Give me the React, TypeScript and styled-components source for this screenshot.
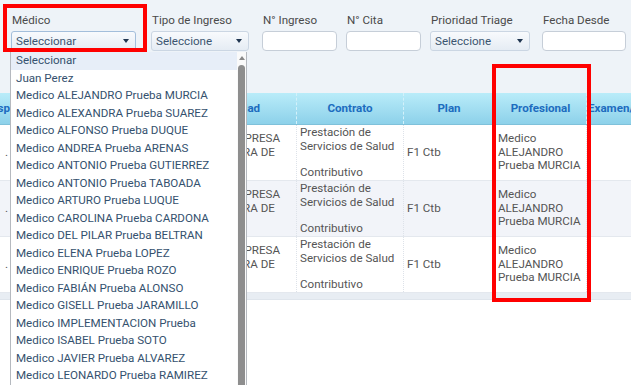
import React from 'react';
import styled, { createGlobalStyle } from 'styled-components';

const GlobalStyle = createGlobalStyle`
  html, body { margin: 0; padding: 0; background: #fff; }
  body { font-family: Roboto, "Liberation Sans", sans-serif; font-size: 11.6px; color: #555; }
`;

const Page = styled.div`
  position: relative;
  width: 631px;
  height: 385px;
  overflow: hidden;
  background: #fff;
`;

const FilterBar = styled.div`
  display: flex;
  height: 93px;
  box-sizing: border-box;
  padding: 12px 0 0 11px;
  background: #eef3f8;
`;

const Field = styled.div<{ $w: number }>`
  position: relative;
  flex: 0 0 ${(p) => p.$w}px;
  display: flex;
  flex-direction: column;
`;

const Label = styled.div`
  height: 19px;
  line-height: 16px;
  padding-left: 1px;
  font-size: 11.6px;
  color: #4a4a4a;
`;

const SelectBox = styled.div<{ $w: number; $active?: boolean }>`
  width: ${(p) => p.$w}px;
  height: 20px;
  box-sizing: border-box;
  display: flex;
  align-items: center;
  justify-content: space-between;
  padding: 0 6px 0 4px;
  border: 1px solid ${(p) => (p.$active ? '#a3bedb' : '#cbd6e3')};
  border-radius: 3px;
  background: linear-gradient(#f8fafd, #e5ecf4);
  color: #3b5570;
  font-size: 11.6px;
`;

const Caret = styled.span`
  width: 0;
  height: 0;
  border-left: 3.5px solid transparent;
  border-right: 3.5px solid transparent;
  border-top: 4px solid #1f3550;
`;

const TextInput = styled.div<{ $w: number }>`
  width: ${(p) => p.$w}px;
  height: 20px;
  box-sizing: border-box;
  border: 1px solid #c6ced8;
  border-radius: 4px;
  background: #fff;
`;

const DropList = styled.div`
  position: absolute;
  left: -1px;
  top: 40px;
  z-index: 5;
  width: 237px;
  height: 360px;
  box-sizing: border-box;
  display: flex;
  border: 1px solid #b5b9bf;
  border-top: none;
  background: #fff;
`;

const Options = styled.div`
  flex: 1;
  display: flex;
  flex-direction: column;
`;

const Option = styled.div<{ $selected?: boolean }>`
  height: 17.5px;
  line-height: 17.5px;
  padding-left: 5px;
  white-space: nowrap;
  color: #34516e;
  font-size: 11.6px;
  background: ${(p) => (p.$selected ? '#e7eef8' : 'transparent')};
`;

const ScrollTrack = styled.div`
  flex: 0 0 9px;
  display: flex;
  flex-direction: column;
  align-items: center;
  padding-top: 4px;
  background: #fafafa;
`;

const ArrowUp = styled.span`
  width: 0;
  height: 0;
  border-left: 3px solid transparent;
  border-right: 3px solid transparent;
  border-bottom: 4px solid #888;
`;

const Thumb = styled.div`
  margin-top: 5px;
  width: 7px;
  flex: 1;
  border-radius: 4px;
  background: #8e8e8e;
`;

const COLS = '52px 173px 112px 107px 91px 92px 80px';

const Table = styled.div`
  margin-left: -40px;
`;

const HeadRow = styled.div`
  display: grid;
  grid-template-columns: ${COLS};
  height: 31px;
  background: linear-gradient(#b9ecf9, #8dd1ea);
  border-bottom: 1px solid #7fc1da;
`;

const HeadCell = styled.div<{ $align?: string }>`
  overflow: hidden;
  white-space: nowrap;
  line-height: 31px;
  padding: 0 1px;
  text-align: ${(p) => p.$align || 'center'};
  color: #1c6cbf;
  font-weight: bold;
  font-size: 11.6px;
  border-right: 1px dashed #d3f1fa;
`;

const Row = styled.div<{ $alt?: boolean }>`
  display: grid;
  grid-template-columns: ${COLS};
  height: 55px;
  border-bottom: 1px solid #e4e8ee;
  background: ${(p) => (p.$alt ? '#f2f4f9' : '#fff')};
`;

const Cell = styled.div<{ $top?: boolean; $right?: boolean }>`
  overflow: hidden;
  display: flex;
  flex-direction: column;
  justify-content: ${(p) => (p.$top ? 'flex-start' : 'center')};
  align-items: ${(p) => (p.$right ? 'flex-end' : 'flex-start')};
  padding: 1px 3px;
  line-height: 13.5px;
  font-size: 11.6px;
  color: #555;
  white-space: nowrap;
  border-right: 1px dotted #dde2e9;
`;

const Blank = styled.span`
  height: 13.5px;
`;

const FootBand = styled.div`
  height: 6px;
  background: #e8edf3;
  border-bottom: 1px solid #dfe5ec;
`;

const Marker = styled.div<{ $x: number; $y: number; $w: number; $h: number }>`
  position: absolute;
  left: ${(p) => p.$x}px;
  top: ${(p) => p.$y}px;
  width: ${(p) => p.$w}px;
  height: ${(p) => p.$h}px;
  box-sizing: border-box;
  border: 4px solid #ff0000;
  z-index: 10;
`;

const MEDICOS = [
  'Seleccionar',
  'Juan Perez',
  'Medico ALEJANDRO Prueba MURCIA',
  'Medico ALEXANDRA Prueba SUAREZ',
  'Medico ALFONSO Prueba DUQUE',
  'Medico ANDREA Prueba ARENAS',
  'Medico ANTONIO Prueba GUTIERREZ',
  'Medico ANTONIO Prueba TABOADA',
  'Medico ARTURO Prueba LUQUE',
  'Medico CAROLINA Prueba CARDONA',
  'Medico DEL PILAR Prueba BELTRAN',
  'Medico ELENA Prueba LOPEZ',
  'Medico ENRIQUE Prueba ROZO',
  'Medico FABIÁN Prueba ALONSO',
  'Medico GISELL Prueba JARAMILLO',
  'Medico IMPLEMENTACION Prueba',
  'Medico ISABEL Prueba SOTO',
  'Medico JAVIER Prueba ALVAREZ',
  'Medico LEONARDO Prueba RAMIREZ',
  'Medico LUIS Prueba GARCIA',
];

const ROWS = [1, 2, 3];

const App = () => {
  return (
    <Page>
      <GlobalStyle />
      <FilterBar>
        <Field $w={140}>
          <Label>Médico</Label>
          <SelectBox $w={125} $active>
            <span>Seleccionar</span>
            <Caret />
          </SelectBox>
          <DropList>
            <Options>
              {MEDICOS.map((m, i) => (
                <Option key={m} $selected={i === 0}>
                  {m}
                </Option>
              ))}
            </Options>
            <ScrollTrack>
              <ArrowUp />
              <Thumb />
            </ScrollTrack>
          </DropList>
        </Field>
        <Field $w={111}>
          <Label>Tipo de Ingreso</Label>
          <SelectBox $w={98}>
            <span>Seleccione</span>
            <Caret />
          </SelectBox>
        </Field>
        <Field $w={84}>
          <Label>N° Ingreso</Label>
          <TextInput $w={75} />
        </Field>
        <Field $w={84}>
          <Label>N° Cita</Label>
          <TextInput $w={75} />
        </Field>
        <Field $w={112}>
          <Label>Prioridad Triage</Label>
          <SelectBox $w={100}>
            <span>Seleccione</span>
            <Caret />
          </SelectBox>
        </Field>
        <Field $w={90}>
          <Label>Fecha Desde</Label>
          <TextInput $w={84} />
        </Field>
      </FilterBar>

      <Table>
        <HeadRow>
          <HeadCell $align="right">Resp</HeadCell>
          <HeadCell>Paciente</HeadCell>
          <HeadCell>Entidad</HeadCell>
          <HeadCell>Contrato</HeadCell>
          <HeadCell>Plan</HeadCell>
          <HeadCell>Profesional</HeadCell>
          <HeadCell>Examen/Procedimiento</HeadCell>
        </HeadRow>
        {ROWS.map((r) => (
          <Row key={r} $alt={r === 2}>
            <Cell $right>.</Cell>
            <Cell>Paciente {r}</Cell>
            <Cell>
              <span>NUEVA EMPRESA</span>
              <span>PROMOTORA DE</span>
              <span>SALUD S.A.</span>
            </Cell>
            <Cell $top>
              <span>Prestación de</span>
              <span>Servicios de Salud</span>
              <Blank />
              <span>Contributivo</span>
            </Cell>
            <Cell>F1 Ctb</Cell>
            <Cell>
              <span>Medico</span>
              <span>ALEJANDRO</span>
              <span>Prueba MURCIA</span>
            </Cell>
            <Cell />
          </Row>
        ))}
        <FootBand />
      </Table>

      <Marker $x={3} $y={4} $w={144} $h={48} />
      <Marker $x={492} $y={64} $w={99} $h={238} />
    </Page>
  );
};

export default App;
